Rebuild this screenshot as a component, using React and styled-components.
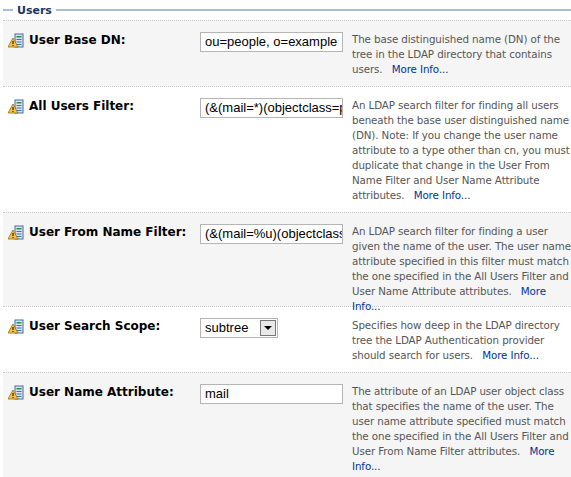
import React from 'react';
import styled, { createGlobalStyle } from 'styled-components';

const Global = createGlobalStyle`
  body { margin: 0; background: #fff; font-family: Tahoma, "DejaVu Sans", Verdana, sans-serif; }
`;

const Fieldset = styled.div`
  padding: 0 0 0 3px;
  width: 572px;
`;

const Legend = styled.div`
  display: flex;
  align-items: center;
  height: 20px;
  &::before { content: ''; width: 10px; height: 2px; background: #a9bdd4; margin-right: 4px; }
  &::after { content: ''; flex: 1; height: 2px; background: #a9bdd4; margin-left: 4px; }
`;

const LegendText = styled.span`
  font-size: 11px;
  font-weight: bold;
  color: #1b3563;
`;

const Row = styled.div`
  display: grid;
  grid-template-columns: 197px 152px 1fr;
  height: ${(p) => p.h}px;
  background: ${(p) => (p.alt ? '#f5f5f5' : '#fff')};
  border-top: 1px dotted #c8c8c8;
  box-sizing: border-box;
  padding-top: 11px;
  &:last-child { border-bottom: 1px dotted #c8c8c8; }
`;

const Label = styled.div`
  display: flex;
  align-items: flex-start;
  gap: 5px;
  padding: 1px 0 0 5px;
  font-size: 12px;
  font-weight: bold;
  color: #000;
`;

const Input = styled.div`
  width: 143px;
  height: 20px;
  box-sizing: border-box;
  border: 1px solid #b5b5b5;
  background: #fff;
  font-family: "Liberation Sans", Arial, sans-serif;
  font-size: 13px;
  line-height: 18px;
  padding-left: 4px;
  white-space: nowrap;
  overflow: hidden;
`;

const Select = styled.div`
  width: 78px;
  height: 20px;
  box-sizing: border-box;
  border: 1px solid #b5b5b5;
  background: #fff;
  display: flex;
  font-family: "Liberation Sans", Arial, sans-serif;
  font-size: 13px;
  line-height: 18px;
  padding-left: 4px;
  span { flex: 1; }
`;

const Arrow = styled.div`
  width: 16px;
  height: 16px;
  margin: 1px;
  box-sizing: border-box;
  border: 1px solid #777;
  background: #e8e8e8;
  display: flex;
  align-items: center;
  justify-content: center;
  &::after { content: ''; border: 4px solid transparent; border-top: 4px solid #000; border-bottom: 0; }
`;

const Desc = styled.div`
  font-family: Tahoma, "DejaVu Sans", Verdana, sans-serif;
  font-size: 10.3px;
  letter-spacing: -0.1px;
  line-height: 15px;
  color: #555;
  padding-right: 4px;
  a { color: #003399; text-decoration: none; padding-left: 6px; }
`;

const Icon = () => (
  <svg width="16" height="16" viewBox="0 0 16 16">
    <rect x="7" y="1" width="8" height="13" fill="#d8e6f6" stroke="#3a6ea5" />
    <rect x="8.5" y="3" width="5" height="1.5" fill="#3a8a3a" />
    <rect x="8.5" y="6" width="5" height="1" fill="#3a6ea5" />
    <rect x="8.5" y="8.5" width="5" height="1" fill="#3a6ea5" />
    <rect x="8.5" y="11" width="5" height="1" fill="#3a6ea5" />
    <path d="M5 5 L10 14 L0 14 Z" fill="#f5c542" stroke="#a06a10" strokeWidth="0.8" />
    <rect x="4.5" y="8" width="1" height="3" fill="#000" />
    <rect x="4.5" y="12" width="1" height="1" fill="#000" />
  </svg>
);

const rows = [
  { h: 66, alt: true, label: 'User Base DN:', value: 'ou=people, o=example',
    desc: 'The base distinguished name (DN) of the tree in the LDAP directory that contains users.' },
  { h: 126, label: 'All Users Filter:', value: '(&(mail=*)(objectclass=person))',
    desc: 'An LDAP search filter for finding all users beneath the base user distinguished name (DN). Note: If you change the user name attribute to a type other than cn, you must duplicate that change in the User From Name Filter and User Name Attribute attributes.' },
  { h: 94, alt: true, label: 'User From Name Filter:', value: '(&(mail=%u)(objectclass=person))',
    desc: 'An LDAP search filter for finding a user given the name of the user. The user name attribute specified in this filter must match the one specified in the All Users Filter and User Name Attribute attributes.' },
  { h: 66, label: 'User Search Scope:', select: 'subtree',
    desc: 'Specifies how deep in the LDAP directory tree the LDAP Authentication provider should search for users.' },
  { h: 110, alt: true, label: 'User Name Attribute:', value: 'mail',
    desc: 'The attribute of an LDAP user object class that specifies the name of the user. The user name attribute specified must match the one specified in the All Users Filter and User From Name Filter attributes.' },
];

export default function App() {
  return (
    <>
      <Global />
      <Fieldset>
        <Legend><LegendText>Users</LegendText></Legend>
        {rows.map((r) => (
          <Row key={r.label} h={r.h} alt={r.alt}>
            <Label><Icon />{r.label}</Label>
            <div>
              {r.select ? (
                <Select><span>{r.select}</span><Arrow /></Select>
              ) : (
                <Input>{r.value}</Input>
              )}
            </div>
            <Desc>{r.desc} <a href="#">More Info...</a></Desc>
          </Row>
        ))}
      </Fieldset>
    </>
  );
}
